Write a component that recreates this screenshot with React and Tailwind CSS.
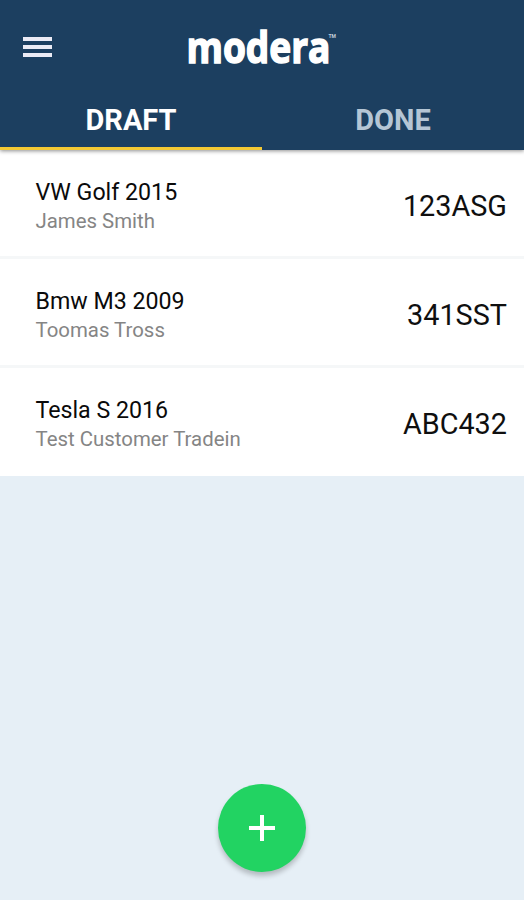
import { useState } from 'react';

const TABS = ['DRAFT', 'DONE'];

const TRADEINS = [
  { id: 1, car: 'VW Golf 2015', customer: 'James Smith', plate: '123ASG' },
  { id: 2, car: 'Bmw M3 2009', customer: 'Toomas Tross', plate: '341SST' },
  { id: 3, car: 'Tesla S 2016', customer: 'Test Customer Tradein', plate: 'ABC432' },
];

function Logo() {
  return (
    <div className="flex items-start">
      <svg width="141" height="56" viewBox="0 0 141 56" className="block shrink-0 overflow-visible">
        <text
          x="-0.5"
          y="38.5"
          fill="#fff"
          stroke="#fff"
          strokeWidth="1.5"
          fontFamily="'Open Sans', sans-serif"
          fontWeight="700"
          fontSize="42.5"
          textLength="144"
          lengthAdjust="spacingAndGlyphs"
        >
          modera
        </text>
      </svg>
      <svg width="9" height="8" viewBox="0 0 9 8" className="mt-2 block shrink-0 overflow-visible">
        <text x="0.5" y="6" fill="#c3cfdb" fontFamily="Roboto, sans-serif" fontWeight="700" fontSize="5.5" textLength="7.5" lengthAdjust="spacingAndGlyphs">
          TM
        </text>
      </svg>
    </div>
  );
}

function Header({ tab, onTab }) {
  return (
    <header className="relative z-10 bg-[#1c3f60] shadow-[0_1px_4px_rgba(0,0,0,0.45)]">
      <div className="grid h-[90px] grid-cols-[1fr_150px_1fr] items-start">
        <button className="mt-[37px] ml-[23px] flex w-[29px] flex-col gap-1" aria-label="Menu">
          <span className="h-1 w-full bg-[#ebebf5]" />
          <span className="h-1 w-full bg-[#ebebf5]" />
          <span className="h-1 w-full bg-[#ebebf5]" />
        </button>
        <div className="mt-6">
          <Logo />
        </div>
      </div>
      <nav className="flex h-[60px]">
        {TABS.map((name) => (
          <button
            key={name}
            onClick={() => onTab(name)}
            className={`flex-1 border-b-[3px] pt-0.5 text-[29px] leading-[56px] font-bold ${
              tab === name ? 'border-[#f3c934] text-white' : 'border-transparent text-[#b5c6d5]'
            }`}
          >
            {name}
          </button>
        ))}
      </nav>
    </header>
  );
}

function TradeinRow({ item }) {
  return (
    <li className="flex h-[109px] items-center justify-between border-b-[3px] border-[#f5f7f8] bg-white pr-[17px] pl-[35.5px] last:h-[108px] last:border-b-2 last:border-white">
      <div className="pt-[5px]">
        <h2 className="text-[23.2px] leading-[30px] text-[#0a0a0a]">{item.car}</h2>
        <p className="text-[20.4px] leading-[28px] text-[#858585]">{item.customer}</p>
      </div>
      <span className="pt-[5px] text-[28.8px] leading-[36px] text-[#0f0f0f]">{item.plate}</span>
    </li>
  );
}

export default function App() {
  const [tab, setTab] = useState('DRAFT');

  return (
    <div className="flex h-[900px] w-[524px] flex-col bg-[#e6eff6] font-['Roboto',sans-serif]">
      <Header tab={tab} onTab={setTab} />
      <ul>
        {TRADEINS.map((item) => (
          <TradeinRow key={item.id} item={item} />
        ))}
      </ul>
      <div className="mt-auto flex justify-center pb-7">
        <button
          className="flex size-[88px] items-center justify-center rounded-full bg-[#22d362] shadow-[0_4px_5px_rgba(0,0,0,0.22)]"
          aria-label="Add"
        >
          <svg width="28" height="28" viewBox="0 0 28 28" fill="none" stroke="#fff" strokeWidth="4">
            <path d="M14 1v26M1 14h26" />
          </svg>
        </button>
      </div>
    </div>
  );
}
